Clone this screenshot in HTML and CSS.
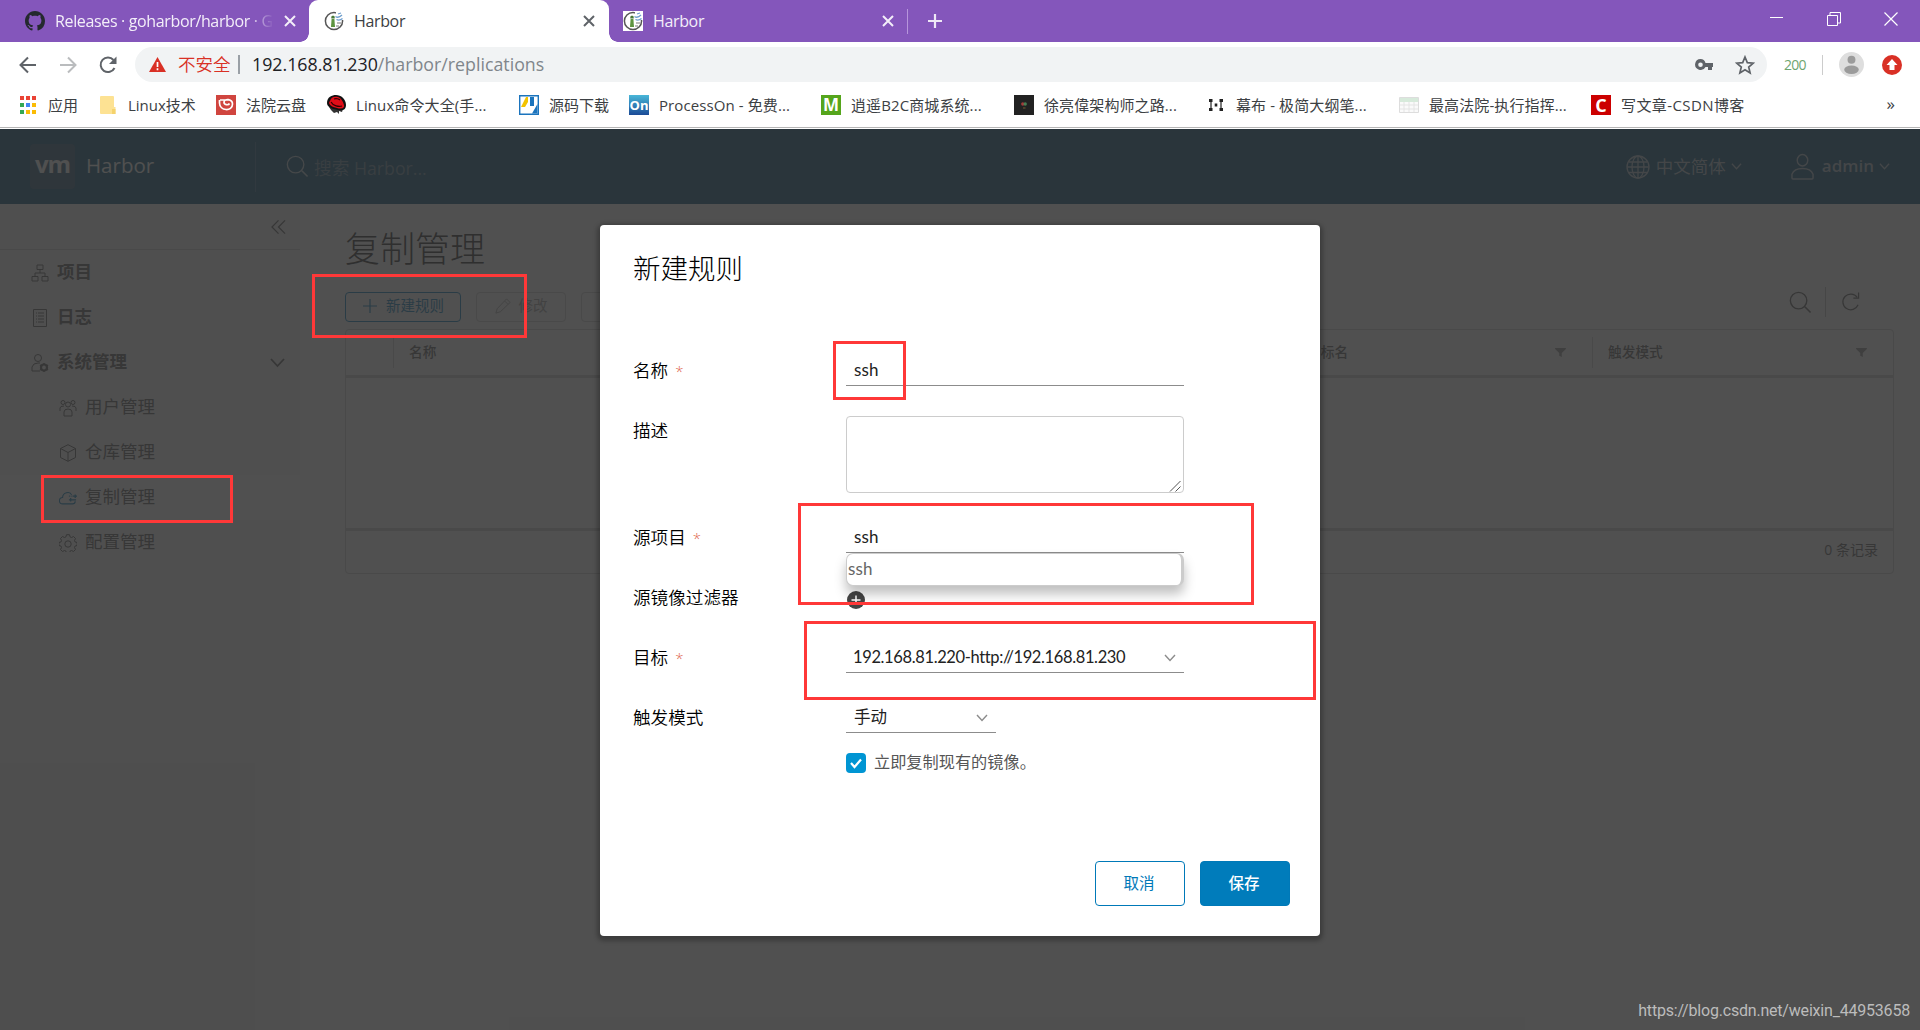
FILE: index.html
```html
<!DOCTYPE html>
<html lang="zh-CN">
<head>
  <meta charset="UTF-8">
  <title>Harbor</title>
  <link rel="stylesheet" href="styles.css">
</head>
<body>
<!-- 公用图标 -->
<svg class="defs" width="0" height="0">
  <symbol id="close" viewBox="0 0 12 12"><path d="M1 1l10 10M11 1L1 11" fill="none" stroke="currentColor" stroke-width="2"/></symbol>
  <symbol id="caret" viewBox="0 0 12 12"><path d="M1 3l5 5.5L11 3" fill="none" stroke="currentColor" stroke-width="1.4"/></symbol>
  <symbol id="search" viewBox="0 0 24 24"><circle cx="10" cy="10" r="8.6" fill="none" stroke="currentColor" stroke-width="1.4"/><path d="M16.5 16.5l6 6" stroke="currentColor" stroke-width="1.6"/></symbol>
  <symbol id="filter" viewBox="0 0 12 10"><path d="M0 0h12v1L7.4 5.5V10L4.6 8.6V5.5L0 1z" fill="currentColor"/></symbol>
  <symbol id="harbor" viewBox="0 0 20 20"><circle cx="10" cy="10" r="8.6" fill="#fff" stroke="#555" stroke-width="1.5"/><path d="M12 1h8v8h-8z" fill="#fff"/><path d="M7 16l.6-8h2.800l.6 8z" fill="#5d9440"/><path d="M7.300 7.500V5.500L9 4.500l1.700 1v2z" fill="#487a38"/><path d="M11.500 5.500q3 2 6.500-1.500M12.500 8.500q3 1.500 6-1M14 3l3-1" stroke="#6d9dcc" stroke-width="1.300" fill="none"/><path d="M13 12h4M12 15h3" stroke="#777"/></symbol>
</svg>

<div class="browser">
  <div class="tabs">
    <div class="tab tab1">
      <svg class="fav" viewBox="0 0 16 16"><path fill="#24292e" d="M8 0C3.580 0 0 3.580 0 8c0 3.540 2.290 6.530 5.470 7.590.4.070.55-.17.55-.38 0-.19-.01-.82-.01-1.490-2.010.37-2.530-.49-2.690-.94-.09-.23-.48-.94-.82-1.130-.28-.15-.68-.52-.01-.53.63-.01 1.080.58 1.230.82.72 1.210 1.870.87 2.330.66.07-.52.28-.87.51-1.070-1.780-.2-3.640-.89-3.640-3.950 0-.87.31-1.590.82-2.150-.08-.2-.36-1.020.08-2.120 0 0 .67-.21 2.200.82.64-.18 1.320-.27 2-.27s1.360.09 2 .27c1.530-1.040 2.200-.82 2.200-.82.44 1.100.16 1.920.08 2.120.51.56.82 1.270.82 2.150 0 3.070-1.870 3.750-3.650 3.950.29.25.54.73.54 1.480 0 1.070-.01 1.930-.01 2.200 0 .21.15.46.55.38A8.010 8.010 0 0 0 16 8c0-4.420-3.580-8-8-8z"/></svg>
      <span class="name fade">Releases · goharbor/harbor · G</span>
      <svg class="x"><use href="#close"/></svg>
    </div>
    <div class="tab active">
      <svg class="fav"><use href="#harbor"/></svg>
      <span class="name">Harbor</span>
      <svg class="x"><use href="#close"/></svg>
    </div>
    <div class="tab tab3">
      <svg class="fav white"><use href="#harbor"/></svg>
      <span class="name">Harbor</span>
      <svg class="x"><use href="#close"/></svg>
    </div>
    <svg class="plus" viewBox="0 0 16 16"><path d="M8 1v14M1 8h14" stroke="#eee8f6" stroke-width="2.200"/></svg>
    <div class="win">
      <svg viewBox="0 0 14 14"><path d="M0 5.500h13" stroke="#fff"/></svg>
      <svg viewBox="0 0 14 14"><path d="M.5 3.500h10v10H.5zM3 3V.5h10.500V11H11" fill="none" stroke="#fff"/></svg>
      <svg viewBox="0 0 14 14"><path d="M.5.5l13 13M13.500.5l-13 13" stroke="#fff" stroke-width="1.200"/></svg>
    </div>
  </div>

  <div class="toolbar">
    <svg class="nav" viewBox="0 0 20 20"><path d="M18 10H3M10 2.500L2.500 10l7.500 7.500" fill="none" stroke="#5f6368" stroke-width="2"/></svg>
    <svg class="nav" viewBox="0 0 20 20"><path d="M2 10h15M10 2.500l7.500 7.500-7.500 7.500" fill="none" stroke="#babcbe" stroke-width="2"/></svg>
    <svg class="nav" viewBox="0 0 20 20"><path d="M16.500 13A7.300 7.300 0 1 1 15.500 5" fill="none" stroke="#5f6368" stroke-width="2"/><path d="M18.500 1.500V9H11z" fill="#5f6368"/></svg>
    <div class="omnibox">
      <svg class="warn" viewBox="0 0 17 15"><path d="M8.500 0L17 15H0z" fill="#d93025"/><path d="M8.500 5v5M8.500 11.300v2" stroke="#fff" stroke-width="1.700"/></svg>
      <span class="unsafe">不安全</span>
      <span class="url">192.168.81.230<i>/harbor/replications</i></span>
      <svg class="key" viewBox="0 0 18 12"><path fill-rule="evenodd" d="M5.500 0a5.500 5.500 0 1 0 5 8H13v3h4V8h1V4h-7.500a5.500 5.500 0 0 0-5-4zm0 3.500a2.300 2.300 0 1 1 0 4.600 2.300 2.300 0 0 1 0-4.600z" fill="#5f6368"/></svg>
      <svg class="star" viewBox="0 0 20 20"><path d="M10 2l2.300 5.600 6 .5-4.600 3.900 1.400 5.900-5.100-3.200-5.100 3.200 1.400-5.900L1.700 8.100l6-.5z" fill="none" stroke="#5f6368" stroke-width="1.700"/></svg>
    </div>
    <span class="ext">200</span>
    <svg class="avatar" viewBox="0 0 24 24"><circle cx="12" cy="12" r="12" fill="#dedede"/><circle cx="12" cy="7.500" r="3.800" fill="#9b9b9b"/><ellipse cx="12" cy="17" rx="7" ry="4" fill="#9b9b9b"/></svg>
    <svg class="update" viewBox="0 0 20 20"><circle cx="10" cy="10" r="10" fill="#d93025"/><path d="M10 4l5.500 6H12.500v5h-5v-5h-3z" fill="#fff"/></svg>
  </div>

  <div class="bookmarks">
    <div class="bm w80">
      <svg viewBox="0 0 20 20"><path d="M2 1h4v4H2zM8 1h4v4H8zM14 1h4v4h-4z" fill="#ea4335"/><path d="M2 8h4v4H2zM2 15h4v4H2z" fill="#34a853"/><path d="M8 8h4v4H8z" fill="#4285f4"/><path d="M14 8h4v4h-4zM8 15h4v4H8zM14 15h4v4h-4z" fill="#fbbc05"/></svg>
      <span>应用</span>
    </div>
    <div class="bm w118">
      <svg viewBox="0 0 20 20"><path d="M2 2q0-1 1-1h12q1 0 1 1v10h1.500v7H3q-1 0-1-1z" fill="#fde293"/><path d="M14 19v-5h3.500v5z" fill="#f5d36c"/></svg>
      <span>Linux技术</span>
    </div>
    <div class="bm w110">
      <svg viewBox="0 0 20 20"><path d="M0 0h20v20H0z" fill="#d0453f"/><path d="M3.500 5v3c0 8 13 9 13 1 0-5-8-6-8.500-2-.2 3 4.500 3.500 5.500 1.500M4 5h9" fill="none" stroke="#fff" stroke-width="1.700"/></svg>
      <span>法院云盘</span>
    </div>
    <div class="bm w193">
      <svg viewBox="0 0 20 20"><path d="M3 12l14 2-1 3-3-1v3l-2-2-3 1-3-3z" fill="#333"/><path d="M1 8C1 2 6 0 10 0c5 0 10 4 10 10 0 5-4 6-8 5C6 14 1 12 1 8z" fill="#111"/><path d="M4 6c1-4 4-5 8-4 3 1 5 4 6 8 1 4-4 4-7 3C6 12 1 9 4 6z" fill="#e00d18"/><path d="M5 7c2 4 8 5 11 4M8 4c2-1 5 0 6 1" fill="none" stroke="#300" stroke-width="1.200"/></svg>
      <span>Linux命令大全(手...</span>
    </div>
    <div class="bm w110">
      <svg viewBox="0 0 20 20"><path d="M.7.7h18.600v18.600H.7z" fill="#fff" stroke="#1b74bd" stroke-width="1.400"/><path d="M9 2v5l-3 5H2l5-10z" fill="#f3c300"/><path d="M11 2h4v9h-4z" fill="#1b74bd"/><path d="M18.500 9v9.500H13z" fill="#1b74bd"/></svg>
      <span>源码下载</span>
    </div>
    <div class="bm w192"><b class="on">On</b><span>ProcessOn - 免费...</span></div>
    <div class="bm w193"><b class="m">M</b><span>逍遥B2C商城系统...</span></div>
    <div class="bm w192">
      <svg viewBox="0 0 20 20"><path d="M0 0h20v20H0z" fill="#222"/><circle cx="8.800" cy="9" r="1.700" fill="#a33a3a"/><circle cx="11.200" cy="9" r="1.700" fill="#487e53"/><path d="M9 13h2.500" stroke="#765c30"/></svg>
      <span>徐亮偉架构师之路...</span>
    </div>
    <div class="bm w193">
      <svg viewBox="0 0 20 20"><path d="M5 5v10M15 5v10" stroke="#333" stroke-width="1.300"/><path d="M3 4h3.500v3H3zM3 13h3.500v3H3zM13.500 4H17v3h-3.500zM13.500 13H17v3h-3.500zM8.700 8.500h2.600v3H8.700z" fill="#222"/></svg>
      <span>幕布 - 极简大纲笔...</span>
    </div>
    <div class="bm w192">
      <svg viewBox="0 0 20 20"><path d="M.5 2.500h19v15H.5z" fill="#fafafa" stroke="#ddd"/><path d="M1 3h18v4H1z" fill="#d7eadb"/><path d="M1 10h18M1 14h18M5 7v10M10 7v10M15 7v10" stroke="#e4e4e4"/></svg>
      <span>最高法院-执行指挥...</span>
    </div>
    <div class="bm"><b class="c">C</b><span class="csdn">写文章-CSDN博客</span></div>
    <span class="more">»</span>
  </div>
</div>

<div class="app">
  <div class="header">
    <div class="logo">vm</div>
    <span class="brand">Harbor</span>
    <div class="search">
      <svg><use href="#search"/></svg>
      <span>搜索 Harbor...</span>
    </div>
    <div class="menu lang">
      <svg class="globe" viewBox="0 0 24 24"><g fill="none" stroke="currentColor" stroke-width="1.300"><circle cx="12" cy="12" r="11"/><ellipse cx="12" cy="12" rx="6" ry="11"/><path d="M12 1v22M3 7h18M1 12h22M3 17.500h18"/></g></svg>
      <span>中文简体</span>
      <svg class="arrow"><use href="#caret"/></svg>
    </div>
    <div class="menu user">
      <svg class="person" viewBox="0 0 24 28"><g fill="none" stroke="currentColor" stroke-width="1.500"><ellipse cx="12" cy="7.500" rx="5.500" ry="6"/><path d="M1 26v-4c3-8 19-8 22 0v4q0 1-1 1H2q-1 0-1-1z"/></g></svg>
      <span>admin</span>
      <svg class="arrow"><use href="#caret"/></svg>
    </div>
  </div>

  <div class="main">
    <div class="side">
      <div class="fold"><svg viewBox="0 0 16 16"><path d="M8 1L1 8l7 7M15 1L8 8l7 7" fill="none" stroke="currentColor" stroke-width="1.300"/></svg></div>
      <div class="item">
        <svg viewBox="0 0 18 18"><path d="M6 1h6v4.500H6zM1 12.500h6V17H1zM11 12.500h6V17h-6zM9 5.500V9M4 12.500V9h10v3.500" fill="none" stroke="currentColor"/></svg>
        <span>项目</span>
      </div>
      <div class="item">
        <svg viewBox="0 0 18 18"><path d="M2.500.5h13v17h-13zM5 4h1M7 4h6M5 7h1M7 7h6M5 10h1M7 10h6M5 13h1M7 13h6" fill="none" stroke="currentColor"/></svg>
        <span>日志</span>
      </div>
      <div class="item">
        <svg viewBox="0 0 18 18"><path d="M9 17H1v-4q1-4 6-4h2" fill="none" stroke="currentColor"/><circle cx="7" cy="4" r="3.500" fill="none" stroke="currentColor"/><circle cx="13" cy="13.500" r="3" fill="none" stroke="currentColor" stroke-width="2.200"/><path d="M13 9v2M13 16v2M9 11l1.500 1M17 16l-1.500-1M9 16l1.500-1M17 11l-1.500 1" stroke="currentColor" stroke-width="1.500"/></svg>
        <span>系统管理</span>
        <svg class="open" viewBox="0 0 15 15"><path d="M1 4l6.500 7L14 4" fill="none" stroke="currentColor" stroke-width="1.800"/></svg>
      </div>
      <div class="item sub">
        <svg viewBox="0 0 18 18"><g fill="none" stroke="currentColor"><circle cx="9" cy="5.500" r="2.500"/><circle cx="4" cy="3.500" r="2"/><circle cx="14" cy="3.500" r="2"/><path d="M5 17v-4q0-3 4-3t4 3v4zM1 12V9q0-2 4-2M17 12V9q0-2-4-2"/></g></svg>
        <span>用户管理</span>
      </div>
      <div class="item sub">
        <svg viewBox="0 0 18 18"><path d="M9 .7l7.500 3.800v9L9 17.300l-7.500-3.800v-9zM1.500 4.500L9 8.500l7.500-4M9 8.500v8.800" fill="none" stroke="currentColor"/></svg>
        <span>仓库管理</span>
      </div>
      <div class="item sub current">
        <svg viewBox="0 0 20 18"><path d="M18 12.500q0 3-3 3H4q-3.500 0-3.500-3.500T4 8.500C4 3 12 1 14 5.500" fill="none" stroke="currentColor" stroke-width="1.200"/><path d="M11 11h8M13 9v4zM11 7h1M13 7h1M15 7h5M18 5v4z" fill="none" stroke="currentColor" stroke-width="1.400"/></svg>
        <span>复制管理</span>
      </div>
      <div class="item sub">
        <svg viewBox="0 0 18 18"><path d="M7.500.7h3l.5 2.100 1.500.7 2-1 2 2-1 2 .6 1.500 2 .5v3l-2 .5-.6 1.500 1 2-2 2-2-1-1.500.7-.5 2h-3l-.5-2-1.500-.7-2 1-2-2 1-2-.6-1.500-2-.5v-3l2-.5.6-1.500-1-2 2-2 2 1 1.500-.7z" fill="none" stroke="currentColor"/><circle cx="9" cy="10" r="3.200" fill="none" stroke="currentColor"/></svg>
        <span>配置管理</span>
      </div>
    </div>

    <div class="content">
      <h2>复制管理</h2>
      <div class="actions">
        <div class="btn create"><svg viewBox="0 0 16 16"><path d="M8 1v14M1 8h14" stroke="currentColor" stroke-width="1.200"/></svg>新建规则</div>
        <div class="btn off"><svg viewBox="0 0 18 18"><path d="M1 17l1.500-5L13 1l4 4L6 15.500zM11 3.500l3.500 3.500" fill="none" stroke="currentColor"/></svg>修改</div>
        <div class="btn off"><svg viewBox="0 0 16 16"><path d="M2 2l12 12M14 2L2 14" stroke="currentColor"/></svg>删除</div>
        <div class="tools">
          <svg><use href="#search"/></svg>
          <svg class="refresh" viewBox="0 0 20 20"><path d="M18 13a8.300 8.300 0 1 1-1-8M18.500 0v6H13" fill="none" stroke="currentColor" stroke-width="1.300"/></svg>
        </div>
      </div>
      <div class="grid">
        <div class="row">
          <div class="col pick"></div>
          <div class="col rule">名称</div>
          <div class="col target">目标名<svg><use href="#filter"/></svg></div>
          <div class="col trigger">触发模式<svg><use href="#filter"/></svg></div>
        </div>
        <div class="empty"></div>
        <div class="foot">0 条记录</div>
      </div>
    </div>
  </div>
</div>

<div class="backdrop">
  <div class="modal">
    <h3>新建规则</h3>
    <div class="field">
      <label>名称<em>*</em></label>
      <div class="input">ssh</div>
    </div>
    <div class="field desc">
      <label>描述</label>
      <div class="area"><svg viewBox="0 0 12 12"><path d="M1 11.500L11.500 1M6.500 11.500l5-5" stroke="#555"/></svg></div>
    </div>
    <div class="field">
      <label>源项目<em>*</em></label>
      <div class="input">ssh<div class="suggest">ssh</div></div>
    </div>
    <div class="field">
      <label>源镜像过滤器</label>
      <svg class="add" viewBox="0 0 18 18"><circle cx="9" cy="9" r="9" fill="#444"/><path d="M9 4.500v9M4.500 9h9" stroke="#fff" stroke-width="1.500"/></svg>
    </div>
    <div class="field">
      <label>目标<em>*</em></label>
      <div class="input select"><span>192.168.81.220-http://192.168.81.230</span><svg><use href="#caret"/></svg></div>
    </div>
    <div class="field">
      <label>触发模式</label>
      <div class="input select short">手动<svg><use href="#caret"/></svg></div>
    </div>
    <div class="check">
      <i><svg viewBox="0 0 20 20"><path d="M5 10l3.500 4L15 6.500" fill="none" stroke="#fff" stroke-width="2.200"/></svg></i>
      <span>立即复制现有的镜像。</span>
    </div>
    <div class="footer">
      <div class="cancel">取消</div>
      <div class="save">保存</div>
    </div>
  </div>
</div>

<!-- 红框标注 -->
<div class="mark mark1"></div>
<div class="mark mark2"></div>
<div class="mark mark3"></div>
<div class="mark mark4"></div>
<div class="mark mark5"></div>
<div class="watermark">https://blog.csdn.net/weixin_44953658</div>
</body>
</html>
```
FILE: styles.css
```css
*{
  margin: 0;
  padding: 0;
  box-sizing: border-box;
}
body{
  width: 1920px;
  height: 1030px;
  overflow: hidden;
  display: flex;
  flex-direction: column;
  position: relative;
  font-family: "Open Sans", "Noto Sans CJK SC", sans-serif;
}
svg{
  display: block;
  flex: none;
}
span, div{
  white-space: nowrap;
}
.defs{
  position: absolute;
}

/*浏览器*/
.browser{
  height: 129px;
  background: #fff;
}
.tabs{
  height: 42px;
  background: #8456bb;
  display: flex;
  align-items: center;
}
.tab{
  height: 42px;
  display: flex;
  align-items: center;
  color: #f3eef9;
  font-size: 16px;
}
.tab1{
  width: 309px;
  padding: 0 13px 0 25px;
}
.tab.active{
  width: 300px;
  padding: 0 14px 0 15px;
  background: #fff;
  color: #3c4043;
  border-radius: 9px 9px 0 0;
  position: relative;
}
.active::before, .active::after{
  content: "";
  position: absolute;
  bottom: 0;
  width: 9px;
  height: 9px;
}
.active::before{
  left: -9px;
  background: radial-gradient(circle at 0 0, transparent 8.5px, #fff 9px);
}
.active::after{
  right: -9px;
  background: radial-gradient(circle at 100% 0, transparent 8.5px, #fff 9px);
}
.tab3{
  width: 299px;
  height: 25px;
  padding: 0 13px 0 14px;
  border-right: 1px solid #b795dc;
}
.fav{
  width: 20px;
  height: 20px;
  margin-right: 10px;
}
.fav.white{
  background: #fff;
}
.name{
  flex: 1;
  overflow: hidden;
  letter-spacing: -0.35px;
}
.fade{
  margin-right: 10px;
  -webkit-mask-image: linear-gradient(90deg, #000 88%, transparent);
  mask-image: linear-gradient(90deg, #000 88%, transparent);
}
.x{
  width: 12px;
  height: 12px;
}
.active .x{
  color: #5f6368;
}
.plus{
  width: 16px;
  height: 16px;
  margin-left: 19px;
}
.win{
  margin-left: auto;
  padding: 0 22px 4px 0;
  display: flex;
  gap: 43px;
}
.win svg{
  width: 14px;
  height: 14px;
}
.toolbar{
  height: 45px;
  display: flex;
  align-items: center;
  padding: 0 18px;
}
.nav{
  width: 20px;
  height: 20px;
  margin-right: 20px;
}
.nav:nth-child(3){
  margin-right: 17px;
}
.omnibox{
  width: 1634px;
  height: 35px;
  border-radius: 18px;
  background: #f1f3f4;
  display: flex;
  align-items: center;
  padding: 0 12px 0 14px;
  font-size: 17.8px;
}
.warn{
  width: 17px;
  height: 15px;
  margin-right: 12px;
}
.unsafe{
  width: 62px;
  border-right: 2px solid #9aa0a6;
  line-height: 19px;
  color: #d93025;
  font-size: 17.5px;
  font-weight: 350;
}
.url{
  margin-left: 12px;
  padding-bottom: 1px;
  color: #202124;
  flex: 1;
}
.url i{
  font-style: normal;
  color: #80868b;
}
.key{
  width: 18px;
  height: 12px;
}
.star{
  width: 20px;
  height: 20px;
  margin-left: 22px;
}
.ext{
  margin-left: 17px;
  width: 39px;
  height: 20px;
  line-height: 19px;
  font-size: 14px;
  letter-spacing: -0.8px;
  color: #6ea56f;
  border-right: 1px solid #ccc;
}
.avatar{
  width: 25px;
  height: 25px;
  margin-left: 16px;
}
.update{
  width: 20px;
  height: 20px;
  margin-left: 18px;
}
.bookmarks{
  height: 41px;
  padding: 0 25px 4px 18px;
  border-bottom: 1px solid #b5b5b5;
  display: flex;
  align-items: center;
  font-size: 15px;
  color: #3c4043;
}
.bm{
  display: flex;
  align-items: center;
  gap: 10px;
}
.bm span{
  padding-bottom: 2px;
}
.bm svg, .bm b{
  width: 20px;
  height: 20px;
}
.bm b{
  line-height: 20px;
  text-align: center;
  color: #fff;
  font-size: 13px;
}
.w80{ width: 80px; }
.w110{ width: 110px; }
.w118{ width: 118px; }
.w192{ width: 192px; }
.w193{ width: 193px; }
.w192 span, .w193 span{
  letter-spacing: 0.1px;
}
.csdn{
  letter-spacing: 0.4px;
}
.on{
  background: linear-gradient(#49b7d8, #1b4b97);
}
.bm .m{
  background: #55a51c;
  font-size: 17px;
}
.bm .c{
  background: #c00;
  font-size: 18px;
}
.more{
  margin-left: auto;
  padding-bottom: 3px;
  font-size: 17px;
}

/*应用*/
.app{
  height: 901px;
  color: #565656;
}
.header{
  height: 75px;
  background: #004a70;
  display: flex;
  align-items: center;
  padding: 0 30px;
  color: #fafafa;
}
.logo{
  width: 45px;
  height: 45px;
  border-radius: 4px;
  background: #255070;
  font: bold 24px/40px "Open Sans", sans-serif;
  letter-spacing: -1px;
  text-align: center;
}
.brand{
  width: 169px;
  margin-left: 11px;
  padding-bottom: 3px;
  font-size: 20.5px;
}
.search{
  height: 50px;
  border-left: 1px solid #33678a;
  padding-left: 30px;
  display: flex;
  align-items: center;
  font-size: 17.7px;
  color: #64879c;
}
.search svg{
  width: 23px;
  height: 23px;
  margin-right: 5px;
  color: #b5c5cf;
}
.menu{
  display: flex;
  align-items: center;
  font-size: 17.5px;
  color: #abbdc9;
}
.menu span{
  padding-bottom: 3px;
}
.menu .arrow{
  width: 11px;
  height: 11px;
  margin-left: 5px;
}
.lang{
  margin-left: auto;
}
.globe{
  width: 24px;
  height: 24px;
  margin-right: 6px;
}
.user{
  margin-left: 49px;
  font-weight: 600;
}
.user span{
  font-size: 17px;
}
.person{
  width: 23px;
  height: 27px;
  margin-right: 8px;
}
.main{
  height: 826px;
  display: flex;
}
.side{
  width: 300px;
  flex: none;
  background: #f5f5f5;
}
.fold{
  height: 46px;
  border-bottom: 1px solid #ccc;
  padding: 15px 0 0 271px;
}
.fold svg{
  width: 15px;
  height: 16px;
}
.item{
  height: 45px;
  padding-left: 31px;
  display: flex;
  align-items: center;
  font-size: 17.5px;
  font-weight: bold;
}
.item span{
  padding-bottom: 4px;
}
.item svg{
  width: 18px;
  height: 18px;
  margin-right: 8px;
}
.item .open{
  width: 15px;
  height: 15px;
  margin: 0 15px 0 auto;
}
.sub{
  padding-left: 59px;
  font-weight: normal;
}
.current{
  background: #fff;
}
.current svg{
  color: #0079b8;
}
.content{
  flex: 1;
  min-width: 0;
  background: #fdfdfd;
  padding: 22px 26px 0 45px;
}
h2{
  font-size: 35px;
  line-height: 46px;
  font-weight: 300;
  color: #222;
}
.actions{
  height: 53px;
  padding-top: 20px;
  display: flex;
  gap: 15px;
}
.btn{
  width: 90px;
  height: 30px;
  border: 1px solid #ccc;
  border-radius: 4px;
  display: flex;
  align-items: center;
  justify-content: center;
  gap: 8px;
  line-height: 26px;
  padding-bottom: 2px;
  font-size: 14.5px;
  color: #a0a0a0;
}
.btn svg{
  width: 16px;
  height: 16px;
}
.create{
  width: 116px;
  border-color: #0079b8;
  color: #0079b8;
}
.tools{
  margin-left: auto;
  margin-top: -5px;
  height: 30px;
  display: flex;
  align-items: center;
  padding-right: 34px;
}
.tools svg{
  width: 23px;
  height: 23px;
}
.tools .refresh{
  width: 35px;
  height: 30px;
  padding: 5px 0 5px 15px;
  margin-left: 13px;
  border-left: 1px solid #bbb;
}
.grid{
  height: 245px;
  margin-top: 4px;
  border: 1px solid #ccc;
  border-radius: 4px;
}
.row{
  height: 48px;
  border-bottom: 3px solid #ccc;
  display: flex;
  align-items: center;
}
.col{
  height: 31px;
  padding: 0 26px 3px 15px;
  border-left: 1px solid #ccc;
  display: flex;
  align-items: center;
  justify-content: space-between;
  font-size: 13.7px;
  font-weight: 500;
}
.col svg{
  width: 11px;
  height: 9px;
  margin-top: 3px;
  color: #8c8c8c;
}
.pick{
  width: 47px;
  padding: 0;
  border: none;
}
.rule{ width: 898px; }
.target{ width: 301px; }
.trigger{ width: 301px; }
.empty{
  height: 153px;
  border-bottom: 3px solid #ccc;
}
.foot{
  line-height: 38px;
  padding-right: 15px;
  text-align: right;
  font-size: 14px;
}

/*弹窗*/
.backdrop{
  position: absolute;
  left: 0;
  top: 129px;
  width: 1920px;
  height: 901px;
  background: rgba(49, 49, 49, 0.85);
  padding-top: 96px;
}
.modal{
  width: 720px;
  height: 711px;
  margin: 0 auto;
  padding: 24px 30px 30px 33px;
  background: #fff;
  border-radius: 4px;
  box-shadow: 0 2px 4px 3px rgba(0, 0, 0, 0.25);
  color: #000;
}
h3{
  font-size: 27.5px;
  line-height: 40px;
  font-weight: 300;
  margin-bottom: 52px;
}
.field{
  height: 60px;
  display: flex;
  align-items: center;
}
.field label{
  width: 213px;
  padding-bottom: 3px;
  font-size: 17.6px;
  font-weight: 350;
}
.field em{
  margin-left: 7px;
  font-style: normal;
  color: #e0694f;
  font-size: 15px;
}
.input{
  width: 338px;
  height: 31px;
  margin-top: -2px;
  border-bottom: 1px solid #8c8c8c;
  padding: 0 8px;
  font: 17px/29px Lato, "Noto Sans CJK SC", sans-serif;
  letter-spacing: 0.2px;
  color: #222;
  position: relative;
}
.desc{
  height: 107px;
  align-items: flex-start;
}
.desc label{
  line-height: 59px;
}
.area{
  width: 338px;
  height: 77px;
  margin-top: 15px;
  border: 1px solid #ccc;
  border-radius: 4px;
  padding: 63px 0 0 322px;
}
.area svg{
  width: 12px;
  height: 12px;
}
.suggest{
  position: absolute;
  left: 0;
  top: 31px;
  width: 338px;
  height: 33px;
  padding-left: 1px;
  border: 1px solid #ccc;
  border-right-width: 3px;
  border-radius: 7px;
  background: #fff;
  color: #666;
  box-shadow: 0 8px 12px rgba(0, 0, 0, 0.25);
}
.add{
  width: 18px;
  height: 18px;
  margin: 4px 0 0 1px;
}
.select{
  display: flex;
  align-items: center;
  justify-content: space-between;
  padding-top: 2px;
  font-size: 16.5px;
  letter-spacing: 0;
}
.select span{
  margin-left: -1px;
  letter-spacing: -0.37px;
}
.select svg{
  width: 12px;
  height: 12px;
  color: #8c8c8c;
}
.short{
  width: 150px;
}
.check{
  margin-left: 213px;
  height: 30px;
  display: flex;
  align-items: center;
  gap: 8px;
  font-size: 16.2px;
  color: #565656;
}
.check span{
  padding-bottom: 4px;
}
.check i{
  width: 20px;
  height: 20px;
  border-radius: 4px;
  background: #0095d3;
}
.footer{
  margin-top: 83px;
  display: flex;
  justify-content: flex-end;
  gap: 15px;
  font-size: 15.5px;
  line-height: 42px;
  text-align: center;
}
.footer div{
  width: 90px;
  height: 45px;
  border: 1px solid #0079b8;
  border-radius: 4px;
  padding-right: 2px;
  color: #0079b8;
}
.footer .save{
  background: #007cbb;
  color: #fff;
  font-weight: 500;
}

/*标注*/
.mark{
  position: absolute;
  border: 3px solid #ff3838;
}
.mark1{ left: 312px; top: 274px; width: 215px; height: 64px; }
.mark2{ left: 41px; top: 475px; width: 192px; height: 48px; }
.mark3{ left: 833px; top: 341px; width: 73px; height: 59px; }
.mark4{ left: 798px; top: 503px; width: 456px; height: 102px; }
.mark5{ left: 804px; top: 621px; width: 512px; height: 79px; }
.watermark{
  position: absolute;
  right: 10px;
  bottom: 7px;
  font: 16px/24px Roboto, sans-serif;
  letter-spacing: -0.2px;
  color: #bcbcbc;
}
```
